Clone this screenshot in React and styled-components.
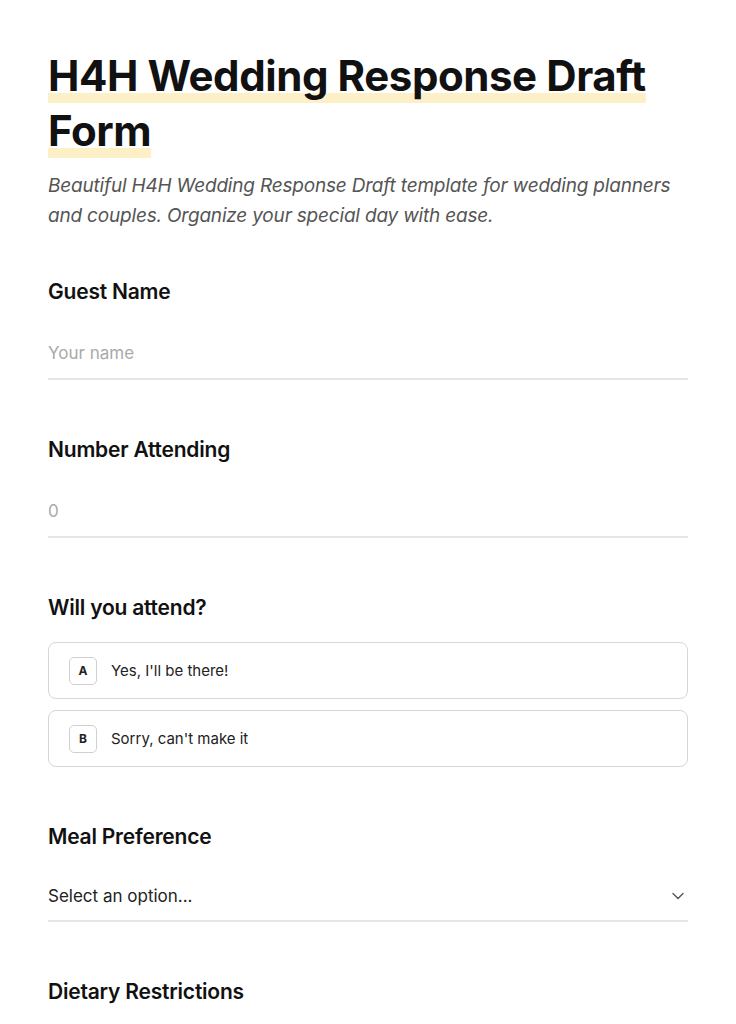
import React from 'react'
import styled, { createGlobalStyle } from 'styled-components'

const GlobalStyle = createGlobalStyle`
  * { box-sizing: border-box; }
  body {
    margin: 0;
    background: #fff;
    color: #111;
    font-family: 'Inter', 'Liberation Sans', sans-serif;
  }
`

const Page = styled.main`
  max-width: 736px;
  padding: 48px 48px 0;
`

const Title = styled.h1`
  margin: 0;
  font-size: 42px;
  line-height: 55px;
  font-weight: 700;
  letter-spacing: -0.01em;
  span {
    text-decoration: underline;
    text-decoration-color: #fdf0c6;
    text-decoration-thickness: 10px;
    text-underline-offset: 2px;
    text-decoration-skip-ink: none;
  }
`

const Subtitle = styled.p`
  margin: 13px 0 0;
  font-size: 19px;
  line-height: 30px;
  font-style: italic;
  color: #555;
  letter-spacing: -0.01em;
`

const Form = styled.form`
  display: flex;
  flex-direction: column;
  gap: 55px;
  margin-top: 46px;
`

const Field = styled.div`
  display: flex;
  flex-direction: column;
`

const Label = styled.label`
  font-size: 21px;
  font-weight: 600;
  line-height: 30px;
  letter-spacing: -0.01em;
  margin-bottom: ${p => p.$gap || 29}px;
`

const TextInput = styled.input`
  border: none;
  border-bottom: 2px solid #e5e5e5;
  padding: 6px 0 14px;
  font: inherit;
  font-size: 17px;
  line-height: 22px;
  color: #111;
  outline: none;
  background: transparent;
  &::placeholder { color: #aaa; }
`

const Options = styled.div`
  display: flex;
  flex-direction: column;
  gap: 11px;
`

const Option = styled.button`
  display: flex;
  align-items: center;
  gap: 14px;
  height: 57px;
  padding: 0 20px;
  border: 1px solid #d6d6d6;
  border-radius: 8px;
  background: #fff;
  font: inherit;
  font-size: 15px;
  color: #222;
  text-align: left;
  cursor: pointer;
`

const Key = styled.span`
  display: inline-flex;
  align-items: center;
  justify-content: center;
  width: 28px;
  height: 28px;
  border: 1px solid #d0d0d0;
  border-radius: 5px;
  font-size: 12px;
  font-weight: 700;
  color: #222;
`

const SelectBox = styled.div`
  display: flex;
  align-items: center;
  justify-content: space-between;
  border-bottom: 2px solid #e5e5e5;
  padding: 6px 0 13px;
  font-size: 17px;
  line-height: 22px;
  color: #222;
  svg { margin-right: 3px; }
`

export default function App() {
  return (
    <>
      <GlobalStyle />
      <Page>
        <Title><span>H4H Wedding Response Draft Form</span></Title>
        <Subtitle>
          Beautiful H4H Wedding Response Draft template for wedding planners and couples. Organize your special day with ease.
        </Subtitle>
        <Form onSubmit={e => e.preventDefault()}>
          <Field>
            <Label>Guest Name</Label>
            <TextInput placeholder="Your name" />
          </Field>
          <Field>
            <Label>Number Attending</Label>
            <TextInput type="number" placeholder="0" />
          </Field>
          <Field>
            <Label $gap={19}>Will you attend?</Label>
            <Options>
              <Option type="button"><Key>A</Key>Yes, I'll be there!</Option>
              <Option type="button"><Key>B</Key>Sorry, can't make it</Option>
            </Options>
          </Field>
          <Field>
            <Label $gap={27}>Meal Preference</Label>
            <SelectBox>
              Select an option...
              <svg width="14" height="14" viewBox="0 0 14 14" fill="none" stroke="#555" strokeWidth="1.4" strokeLinecap="round" strokeLinejoin="round">
                <path d="M2 4.5l5 5 5-5" />
              </svg>
            </SelectBox>
          </Field>
          <Field>
            <Label>Dietary Restrictions</Label>
          </Field>
        </Form>
      </Page>
    </>
  )
}
